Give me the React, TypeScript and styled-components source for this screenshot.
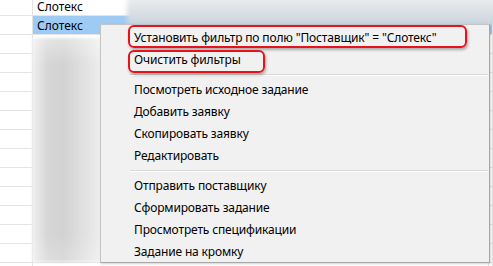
import React from 'react'
import styled, { createGlobalStyle } from 'styled-components'

const GlobalStyle = createGlobalStyle`
  html, body {
    margin: 0;
    padding: 0;
    background: #ffffff;
    overflow: hidden;
  }
`

const Stage = styled.div`
  position: relative;
  width: 493px;
  height: 266px;
  overflow: hidden;
  background: #ffffff;
  font-family: 'Noto Sans', 'Open Sans', sans-serif;
  font-size: 12px;
  color: #000000;
`

// background grid (the table the menu was opened over)
const Grid = styled.div`
  display: flex;
  flex-direction: column;
  margin-top: -3px;
`

const Row = styled.div`
  display: grid;
  grid-template-columns: 33px 1fr 4px;
  height: 18px;
  border-bottom: 1px solid #e3e3e3;
`

const Cell = styled.div<{ $selected?: boolean; $first?: boolean }>`
  display: flex;
  align-items: center;
  padding-left: ${({ $first }) => ($first ? '0' : '4px')};
  padding-top: 1px;
  border-right: 1px solid #e3e3e3;
  background: ${({ $selected }) => ($selected ? '#9dcbf3' : 'transparent')};
  white-space: nowrap;
  overflow: hidden;
`

const TopBlur = styled.div`
  position: absolute;
  left: 127px;
  top: -6px;
  width: 380px;
  height: 31px;
  background: linear-gradient(180deg, #f2f3f4 0%, #dfe3e7 45%, #cbd3dc 100%);
  filter: blur(2.5px);
`

const LeftBlur = styled.div`
  position: absolute;
  left: 32px;
  top: 38px;
  width: 70px;
  height: 224px;
  background:
    linear-gradient(180deg, rgba(255, 255, 255, 0.35) 0%, rgba(255, 255, 255, 0) 12%, rgba(255, 255, 255, 0) 88%, rgba(255, 255, 255, 0.2) 100%),
    linear-gradient(90deg, #f0f0f0 0%, #d6d6d6 22%, #d2d2d2 45%, #e1e1e1 75%, #efefef 100%);
  filter: blur(1.5px);
`

const Menu = styled.div`
  position: absolute;
  left: 100px;
  top: 24px;
  width: 390px;
  height: 239px;
  box-sizing: border-box;
  padding-top: 1px;
  background: #f1f1f1;
  border: 1px solid #c4c4c4;
  border-right-color: #a8a8a8;
  border-bottom-color: #a8a8a8;
  box-shadow: 1px 1px 2px rgba(0, 0, 0, 0.18);
  display: flex;
  flex-direction: column;
  overflow: hidden;
`

const Item = styled.div`
  display: flex;
  align-items: center;
  height: 22px;
  flex-shrink: 0;
  padding-left: 33px;
  white-space: nowrap;
  letter-spacing: -0.15px;
`

const Separator = styled.div`
  height: 8px;
  flex-shrink: 0;
  display: flex;
  align-items: center;
  padding-left: 29px;
  padding-right: 1px;

  &::after {
    content: '';
    flex: 1;
    height: 1px;
    background: #d7d7d7;
    box-shadow: 0 1px 0 #ffffff;
  }
`

const Highlight = styled.div<{ $left: number; $top: number; $width: number; $height: number }>`
  position: absolute;
  left: ${({ $left }) => $left}px;
  top: ${({ $top }) => $top}px;
  width: ${({ $width }) => $width}px;
  height: ${({ $height }) => $height}px;
  box-sizing: border-box;
  border: 2px solid #e8121a;
  border-radius: 6px;
  box-shadow: 1px 2px 3px rgba(0, 0, 0, 0.3);
`

const rows: { text: string; selected?: boolean }[] = [
  { text: 'Слотекс' },
  { text: 'Слотекс', selected: true },
  ...Array.from({ length: 12 }, () => ({ text: '' })),
  { text: 'ПЛИТА' },
]

const groups = [
  ['Установить фильтр по полю "Поставщик" = "Слотекс"', 'Очистить фильтры'],
  ['Посмотреть исходное задание', 'Добавить заявку', 'Скопировать заявку', 'Редактировать'],
  ['Отправить поставщику', 'Сформировать задание', 'Просмотреть спецификации', 'Задание на кромку'],
]

const App: React.FC = () => {
  return (
    <Stage>
      <GlobalStyle />
      <Grid>
        {rows.map((row, i) => (
          <Row key={i}>
            <Cell $first />
            <Cell $selected={row.selected}>{row.text}</Cell>
            <Cell $first $selected={row.selected} />
          </Row>
        ))}
      </Grid>

      <TopBlur />
      <LeftBlur />

      <Menu>
        {groups.map((group, g) => (
          <React.Fragment key={g}>
            {g > 0 && <Separator />}
            {group.map((label) => (
              <Item key={label}>{label}</Item>
            ))}
          </React.Fragment>
        ))}
      </Menu>

      <Highlight $left={128} $top={25} $width={339} $height={23} />
      <Highlight $left={128} $top={50} $width={137} $height={23} />
    </Stage>
  )
}

export default App
